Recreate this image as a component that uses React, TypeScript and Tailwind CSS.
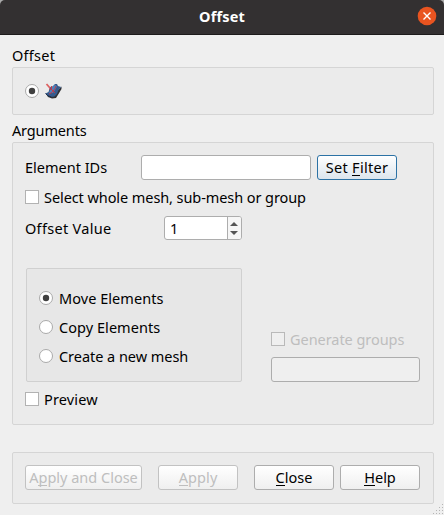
import type { ReactNode } from 'react';

function Radio({ checked = false }: { checked?: boolean }) {
  return (
    <svg className="h-[14px] w-[14px] shrink-0" viewBox="0 0 14 14">
      <circle cx="7" cy="7" r="6.5" fill="#fff" stroke="#a9a9a9" />
      {checked && <circle cx="7" cy="7" r="3.2" fill="#404040" />}
    </svg>
  );
}

function Check({ disabled = false }: { disabled?: boolean }) {
  return (
    <span
      className={`h-[14px] w-[14px] shrink-0 border ${disabled ? 'border-[#b9b9b9] bg-[#efefef]' : 'border-[#b2b2b2] bg-white'}`}
    />
  );
}

function Button({ className, children }: { className: string; children: ReactNode }) {
  return (
    <button
      className={`flex h-[25px] shrink-0 items-center justify-center rounded-[3px] border bg-linear-to-b from-white pb-[2px] whitespace-pre ${className}`}
    >
      {children}
    </button>
  );
}

function Key({ children }: { children: string }) {
  return <span className="h-5 bg-[linear-gradient(currentColor,currentColor)] bg-[length:100%_1px] bg-[position:0_18px] bg-no-repeat">{children}</span>;
}

function OffsetIcon() {
  return (
    <svg className="ml-[5px] h-[18px] w-[18px]" viewBox="0 0 18 18">
      <path d="M2 12 4 15 8 16.5 12 16 14.5 12 17.5 7 17.5 4.5 12 10Z" fill="#303134" />
      <path d="M1.5 11.5 4.5 10 6 5 8.5 4.5 11 2 13 2 14 4 17.2 5 14.5 8 13 12 10.5 14.5 7 15 3.5 13.5Z" fill="#365b8d" />
      <path d="M7 6 11 2.8 13 4.5 11 8 9 11 5 11Z" fill="#4f80b9" />
      <path d="M1.5 11.5 4 13.8 7.5 15" fill="none" stroke="#1b2e4b" />
      <path d="M2.5 2 6 6" fill="none" stroke="#dd6262" strokeWidth="1.8" />
      <path d="M5 7 7.5 7.5 7.5 4M7 7 11 11M5 12 8 10.5 11 6.5 12 4" fill="none" stroke="#c93642" strokeWidth="0.9" />
    </svg>
  );
}

export default function App() {
  return (
    <div className="h-[515px] w-[444px] bg-[#efefef] font-['Noto_Sans','Open_Sans',sans-serif] text-[14.5px] leading-[20px] text-black">
      <div className="bg-[#aaa]">
        <header className="relative flex h-[35px] items-center justify-center rounded-t-[5px] border-b border-[#1d1b1b] bg-[#333031] font-bold text-white">
          <span className="pb-[2px] tracking-[0.15px]">Offset</span>
          <svg className="absolute top-[6px] right-[7px] h-[20px] w-[20px]" viewBox="0 0 20 20">
            <circle cx="10" cy="10" r="9.3" fill="#e95420" />
            <path d="m6.5 6.5 7 7m0-7-7 7" stroke="#fff" strokeWidth="1.4" />
          </svg>
        </header>
      </div>
      <main className="relative flex h-[480px] flex-col px-3 pr-[10px] pt-[11px]">
        <h2 className="h-[21px] leading-[18px] tracking-[0.25px] whitespace-pre">Offset</h2>
        <section className="flex h-[48px] items-center rounded-[2px] border border-[#d5d5d5] bg-[#ebebeb] pl-3">
          <Radio checked />
          <OffsetIcon />
        </section>
        <h2 className="mt-[6px] h-[21px] leading-[18px] tracking-[-0.15px] whitespace-pre">Arguments</h2>
        <section className="h-[283px] rounded-[2px] border border-[#d5d5d5] bg-[#ebebeb] px-3 pt-3">
          <div className="flex h-[25px] items-center">
            <span className="w-[116px] pb-[2px] whitespace-pre">Element IDs</span>
            <input className="h-[25px] w-[170px] rounded-[3px] border border-[#adadad] bg-white" />
            <Button className="ml-[6px] w-[80px] border-[#2c72a5] to-[#dce5ed] tracking-[0.3px]">
              Set <Key>F</Key>ilter
            </Button>
          </div>
          <label className="mt-[7px] flex h-5 items-center gap-[5px] tracking-[-0.08px] whitespace-pre">
            <Check />
            <span>Select whole mesh, sub-mesh or group</span>
          </label>
          <div className="mt-[9px] flex h-6 items-center">
            <span className="w-[139px] pb-px tracking-[0.3px] whitespace-pre">Offset Value</span>
            <div className="flex h-6 w-[78px] overflow-hidden rounded-[3px] border border-[#adadad] bg-white">
              <span className="w-[62px] pl-[5px] leading-[22px]">1</span>
              <svg className="h-[22px] w-[14px]" viewBox="0 0 14 22">
                <path d="M0 0h14v22H0z" fill="#f6f6f6" />
                <path d="M.5 0v22" stroke="#adadad" />
                <path d="M3 9 7 5l4 4zM3 14l4 4 4-4z" fill="#555" />
              </svg>
            </div>
          </div>
          <div className="mt-[28px] flex h-[114px]">
            <div className="ml-px flex w-[216px] flex-col gap-[9px] rounded-[2px] border border-[#d0d0d0] bg-[#e7e7e7] pt-[19px] pl-3">
              <label className="flex h-5 items-center gap-[6px] tracking-[0.05px] whitespace-pre"><Radio checked /><span>Move Elements</span></label>
              <label className="flex h-5 items-center gap-[6px] tracking-[0.05px] whitespace-pre"><Radio /><span>Copy Elements</span></label>
              <label className="flex h-5 items-center gap-[6px] tracking-[-0.04px] whitespace-pre"><Radio /><span>Create a new mesh</span></label>
            </div>
            <div className="ml-[29px] pt-[61px]">
              <label className="flex h-5 items-center gap-[5px] tracking-[-0.05px] whitespace-pre text-[#bebebe]"><Check disabled /><span>Generate groups</span></label>
              <input disabled className="mt-[8px] block h-[25px] w-[149px] rounded-[3px] border border-[#adadad] bg-[#efefef]" />
            </div>
          </div>
          <label className="mt-[7px] flex h-5 items-center gap-[5px] tracking-[0.15px] whitespace-pre"><Check /><span>Preview</span></label>
        </section>
        <footer className="mt-[27px] flex h-[52px] rounded-[2px] border border-[#d5d5d5] bg-[#ebebeb] pt-3 pl-3">
          <Button className="w-[117px] border-[#c2c2c2] to-[#efefef] text-[#bebebe]">A<Key>p</Key>ply and Close</Button>
          <Button className="ml-4 w-[80px] border-[#c2c2c2] to-[#efefef] tracking-[0.1px] text-[#bebebe]"><Key>A</Key>pply</Button>
          <Button className="ml-4 w-[80px] border-[#adadad] to-[#efefef]"><Key>C</Key>lose</Button>
          <Button className="ml-[6px] w-[80px] border-[#adadad] to-[#efefef]"><Key>H</Key>elp</Button>
        </footer>
        <svg className="absolute right-0 bottom-0 h-[12px] w-[12px]" viewBox="0 0 12 12" fill="#b5b5b5">
          <path d="M10 1h1v1h-1zM7 4h1v1H7zM10 4h1v1h-1zM4 7h1v1H4zM7 7h1v1H7zM10 7h1v1h-1zM1 10h1v1H1zM4 10h1v1H4zM7 10h1v1H7zM10 10h1v1h-1z" />
        </svg>
      </main>
    </div>
  );
}
